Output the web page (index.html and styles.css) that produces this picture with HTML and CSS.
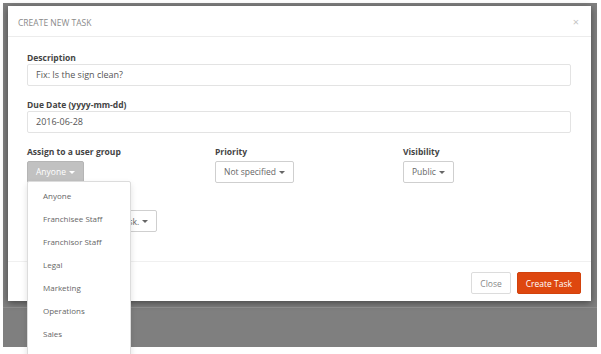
FILE: index.html
```html
<!DOCTYPE html>
<html lang="en">

<head>
    <meta charset="UTF-8" />
    <title>Create New Task</title>
    <link rel="stylesheet" href="styles.css">
</head>

<body>
    <div class="backdrop">
        <div class="modal">
            <div class="modal-header">
                <span class="modal-title">Create New Task</span>
                <span class="close-x">&times;</span>
            </div>

            <div class="modal-body">
                <div class="field">
                    <label>Description</label>
                    <div class="input">Fix: Is the sign clean?</div>
                </div>
                <div class="field">
                    <label>Due Date (yyyy-mm-dd)</label>
                    <div class="input">2016-06-28</div>
                </div>

                <div class="field cols">
                    <div class="col">
                        <label>Assign to a user group</label>
                        <div class="btn-group">
                            <button class="btn active">Anyone <span class="caret"></span></button>
                            <ul class="dropdown-menu">
                                <li>Anyone</li>
                                <li>Franchisee Staff</li>
                                <li>Franchisor Staff</li>
                                <li>Legal</li>
                                <li>Marketing</li>
                                <li>Operations</li>
                                <li>Sales</li>
                            </ul>
                        </div>
                    </div>
                    <div class="col">
                        <label>Priority</label>
                        <button class="btn">Not specified <span class="caret"></span></button>
                    </div>
                    <div class="col">
                        <label>Visibility</label>
                        <button class="btn">Public <span class="caret"></span></button>
                    </div>
                </div>

                <div class="field last">
                    <label></label>
                    <button class="btn">Link to another main task. <span class="caret"></span></button>
                </div>
            </div>

            <div class="modal-footer">
                <button class="btn">Close</button>
                <button class="btn btn-primary">Create Task</button>
            </div>
        </div>
        <div class="page-line"></div>
    </div>
</body>

</html>
```

FILE: styles.css
```css
* {
    margin: 0;
    padding: 0;
    box-sizing: border-box;
}

html,
body {
    height: 100%;
    overflow: hidden;
    background: white;
    font-family: 'Open Sans', 'Liberation Sans', sans-serif;
    color: #555;
}

.backdrop {
    margin: 3px;
    width: 594px;
    height: 344px;
    background: #7f7f7f;
    display: flex;
    flex-direction: column;
}

.modal {
    margin: 3px 6px 0 5px;
    height: 295px;
    background: white;
    box-shadow: 0 2px 7px rgba(0, 0, 0, 0.45);
    display: flex;
    flex-direction: column;
}

.page-line {
    margin-top: 6px;
    border-top: 1px solid #8b8b8b;
}

.modal-header {
    height: 34px;
    padding: 0 12px 0 10px;
    border-bottom: 1px solid #ececec;
    display: flex;
    align-items: center;
    justify-content: space-between;
}

.modal-title {
    font-size: 8.5px;
    text-transform: uppercase;
    color: #8a8a8a;
    padding-top: 2px;
}

.close-x {
    font-size: 11px;
    color: #c4c4c4;
}

.modal-body {
    padding: 12px 20px 29px 19px;
    flex: 1;
}

.field {
    margin-bottom: 10px;
}

.field.last {
    margin-bottom: 0;
}

label {
    display: block;
    height: 15px;
    padding-top: 2px;
    line-height: 13px;
    font-size: 8.5px;
    font-weight: 700;
    color: #444;
}

.input {
    height: 22px;
    border: 1px solid #e3e3e3;
    border-radius: 2px;
    padding: 0 8px;
    font-size: 9px;
    line-height: 20px;
    color: #555;
}

.cols {
    display: grid;
    grid-template-columns: repeat(3, 1fr);
    column-gap: 20px;
}

.btn-group {
    position: relative;
}

.btn {
    height: 22px;
    padding: 0 8px;
    border: 1px solid #cfcfcf;
    border-radius: 2px;
    background: white;
    font-family: inherit;
    font-size: 8.5px;
    color: #666;
    display: inline-flex;
    align-items: center;
    gap: 3px;
}

.btn.active {
    background: #c1c1c1;
    border-color: #b5b5b5;
    color: white;
}

.caret {
    width: 0;
    height: 0;
    border-top: 3px solid currentColor;
    border-left: 3px solid transparent;
    border-right: 3px solid transparent;
    margin-top: 1px;
}

.dropdown-menu {
    position: absolute;
    top: 23px;
    left: 0;
    width: 104px;
    height: 200px;
    padding-top: 2px;
    list-style: none;
    background: white;
    border: 1px solid #dcdcdc;
    border-radius: 2px;
    box-shadow: 0 3px 6px rgba(0, 0, 0, 0.12);
    z-index: 2;
}

.dropdown-menu li {
    height: 23px;
    line-height: 23px;
    padding-left: 15px;
    font-size: 8px;
    color: #666;
}

.modal-footer {
    height: 42px;
    padding: 10px 10px 0;
    border-top: 1px solid #f0f0f0;
    display: flex;
    justify-content: flex-end;
    gap: 6px;
}

.modal-footer .btn {
    padding: 0 8px;
    color: #888;
    border-color: #dcdcdc;
}

.modal-footer .btn-primary {
    background: #de470f;
    border-color: #d2420c;
    color: white;
}
```
